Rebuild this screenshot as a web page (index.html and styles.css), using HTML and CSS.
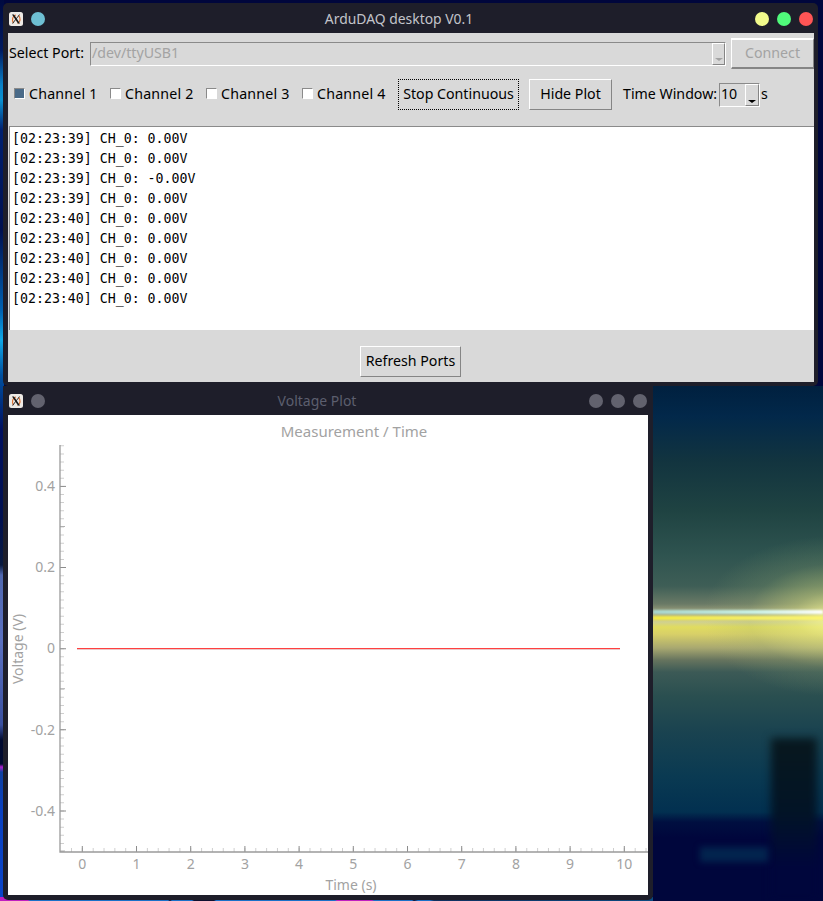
FILE: index.html
```html
<!DOCTYPE html>
<html lang="en">
<head>
<meta charset="utf-8">
<title>ArduDAQ desktop V0.1</title>
<link rel="stylesheet" href="styles.css">
</head>
<body>
<div class="wall-left"></div>
<div class="wall-bottom"></div>
<div class="wall-right">
  <div class="glow"></div>
  <div class="flare-white"></div>
  <div class="flare-yellow"></div>
  <div class="tower"></div>
  <div class="sill"></div>
</div>

<section class="win win-main">
  <header class="titlebar">
    <svg class="xicon" viewBox="0 0 14 14"><rect width="14" height="14" rx="2.5" fill="#eeeae6"/><path d="M7 3C3.5 3.5 2.5 8 4.5 11" class="xo"/><path d="M9.5 3.5C12 6 11.5 10 8.5 11.5" class="xo"/><path d="M3 2.5H5L11 11.5H9Z" class="xk"/><path d="M10.2 2.5H11L4 11.5H3Z" class="xk"/></svg>
    <span class="dot dot-pin"></span>
    <span class="title">ArduDAQ desktop V0.1</span>
    <span class="dot dot-min"></span>
    <span class="dot dot-max"></span>
    <span class="dot dot-close"></span>
  </header>
  <div class="body">
    <div class="row row-port">
      <span class="lbl lbl-port">Select Port:</span>
      <div class="combo">
        <span class="combo-val">/dev/ttyUSB1</span>
        <span class="combo-btn"><i class="tri tri-off"></i></span>
      </div>
      <button class="btn btn-connect" disabled>Connect</button>
    </div>
    <div class="row row-ctl">
      <label class="chk"><i class="box box-on"></i>Channel 1</label>
      <label class="chk"><i class="box"></i>Channel 2</label>
      <label class="chk"><i class="box"></i>Channel 3</label>
      <label class="chk"><i class="box"></i>Channel 4</label>
      <button class="btn btn-stop">Stop Continuous</button>
      <button class="btn btn-hide">Hide Plot</button>
      <span class="lbl lbl-tw">Time Window:</span>
      <div class="spin"><span class="spin-val">10</span><span class="spin-btn"><i class="tri"></i></span></div>
      <span class="lbl lbl-s">s</span>
    </div>
    <pre class="log">[02:23:39] CH_0: 0.00V
[02:23:39] CH_0: 0.00V
[02:23:39] CH_0: -0.00V
[02:23:39] CH_0: 0.00V
[02:23:40] CH_0: 0.00V
[02:23:40] CH_0: 0.00V
[02:23:40] CH_0: 0.00V
[02:23:40] CH_0: 0.00V
[02:23:40] CH_0: 0.00V</pre>
    <div class="row row-refresh"><button class="btn btn-refresh">Refresh Ports</button></div>
  </div>
</section>

<section class="win win-plot">
  <header class="titlebar titlebar-plot">
    <svg class="xicon" viewBox="0 0 14 14"><rect width="14" height="14" rx="2.5" fill="#eeeae6"/><path d="M7 3C3.5 3.5 2.5 8 4.5 11" class="xo"/><path d="M9.5 3.5C12 6 11.5 10 8.5 11.5" class="xo"/><path d="M3 2.5H5L11 11.5H9Z" class="xk"/><path d="M10.2 2.5H11L4 11.5H3Z" class="xk"/></svg>
    <span class="dot dot-off"></span>
    <span class="title title-off">Voltage Plot</span>
    <span class="dot dot-off"></span>
    <span class="dot dot-off"></span>
    <span class="dot dot-off"></span>
  </header>
  <svg class="plot" viewBox="8 415 640 480" width="640" height="480">
    <text class="t t-title t-mid" x="354" y="437">Measurement / Time</text>
    <line class="tick-minor tick-yminor" x1="62" x2="62" y1="445.3" y2="852"/>
    <line class="tick-minor tick-xminor" x1="71" x2="648" y1="850" y2="850"/>
    <line class="tick-mid tick-ymid" x1="62.5" x2="62.5" y1="526" y2="852"/>
    <line class="tick-major tick-ymajor" x1="63" x2="63" y1="485.9" y2="852"/>
    <line class="tick-major tick-xmajor" x1="81.8" x2="648" y1="849" y2="849"/>
    <path class="axis" d="M60 445V852H648"/>
    <text class="t t-end" x="55" y="491">0.4</text>
    <text class="t t-end" x="55" y="572">0.2</text>
    <text class="t t-end" x="55" y="653">0</text>
    <text class="t t-end" x="55" y="735">-0.2</text>
    <text class="t t-end" x="55" y="816">-0.4</text>
    <text class="t t-mid" x="82.3" y="869">0</text>
    <text class="t t-mid" x="136.5" y="869">1</text>
    <text class="t t-mid" x="190.7" y="869">2</text>
    <text class="t t-mid" x="244.9" y="869">3</text>
    <text class="t t-mid" x="299.1" y="869">4</text>
    <text class="t t-mid" x="353.3" y="869">5</text>
    <text class="t t-mid" x="407.5" y="869">6</text>
    <text class="t t-mid" x="461.7" y="869">7</text>
    <text class="t t-mid" x="515.9" y="869">8</text>
    <text class="t t-mid" x="570.1" y="869">9</text>
    <text class="t t-mid" x="624.3" y="869">10</text>
    <text class="t t-mid" x="351" y="890">Time (s)</text>
    <text class="t t-mid" transform="translate(23 649) rotate(-90)">Voltage (V)</text>
    <line class="trace-shadow" x1="77" x2="620" y1="649.5" y2="649.5"/>
    <line class="trace" x1="77" x2="620" y1="648.5" y2="648.5"/>
  </svg>
</section>
</body>
</html>
```
FILE: styles.css
```css
* { box-sizing: border-box; }
html, body { margin: 0; height: 100%; }
body {
  position: relative;
  width: 823px;
  height: 901px;
  overflow: hidden;
  background: #00063c;
  font-family: "Noto Sans", sans-serif;
  font-size: 14.2px;
  color: #000;
}

/* wallpaper */
.wall-left {
  position: absolute;
  left: 0; top: 0;
  width: 4px; height: 901px;
  background: linear-gradient(180deg,
    #000a40 0, #001a60 50px, #0a80c8 85px, #0a90d0 100px, #002070 130px,
    #001050 230px, #0060b0 310px, #10a8e8 340px, #0050a0 375px, #001060 430px,
    #001050 520px, #0a1a40 565px, #5068b0 575px, #5a70c0 640px, #3a50a0 725px,
    #000a30 740px, #000a30 764px, #b020d0 767px, #1040a0 772px, #0a40c0 810px, #0a44c8 901px);
}
.wall-bottom {
  position: absolute;
  left: 0; top: 897px;
  width: 653px; height: 4px;
  background: linear-gradient(90deg,
    #c020c0 0, #c020c0 28px, #1a70c8 30px, #1a70c8 168px, #101030 170px, #1a70c8 172px, #1a70c8 192px,
    #101030 194px, #101030 214px, #1a70c8 216px, #1a70c8 335px, #c020c0 337px, #c020c0 372px, #1a70c8 374px, #1a70c8 412px,
    #101030 414px, #1a70c8 418px, #1a70c8 430px, #103060 434px, #0a4a80 653px);
}
.wall-right {
  position: absolute;
  left: 653px; top: 386px;
  width: 170px; height: 515px;
  overflow: hidden;
  background: linear-gradient(180deg,
    #00203f 0, #02284a 30px, #12343f 75px, #1f4342 125px, #2f5450 170px, #3e5e56 200px,
    #6a7a66 218px, #a8a880 228px, #d0d090 236px, #e0dc60 241px, #d8d068 248px, #a8a870 262px,
    #66745e 274px, #3c5a56 286px, #2a4f50 310px, #1a4350 345px, #0a3a52 390px, #023050 426px,
    #000f40 436px, #00063c 452px, #00063c 515px);
}
.glow {
  position: absolute;
  left: 50px; top: 150px;
  width: 260px; height: 160px;
  border-radius: 50%;
  background: radial-gradient(closest-side, rgba(250,250,150,.8) 0, rgba(225,230,130,.45) 30%, rgba(160,180,115,.18) 65%, rgba(120,150,110,0) 100%);
}
.flare-white {
  position: absolute;
  left: 0; top: 224px;
  width: 170px; height: 4px;
  background: linear-gradient(90deg, #a8d8d0, #cdf5ea 60%, #ffffff);
  filter: blur(1px);
}
.flare-yellow {
  position: absolute;
  left: 0; top: 230px;
  width: 170px; height: 4px;
  background: linear-gradient(90deg, #f5ec40, #f8f060 50%, #fbf570);
  filter: blur(1px);
}
.tower {
  position: absolute;
  left: 118px; top: 352px;
  width: 46px; height: 163px;
  background: linear-gradient(180deg, #08181e 0, #021426 45%, #00063c 80%);
  filter: blur(4px);
}
.sill {
  position: absolute;
  left: 47px; top: 461px;
  width: 68px; height: 15px;
  background: #02244e;
  filter: blur(3px);
}

/* windows */
.win {
  position: absolute;
  background: #1e1e2a;
  border-radius: 5px;
  display: flex;
  flex-direction: column;
  padding: 0 4px 4px 5px;
}
.win-main { left: 3px; top: 3px; width: 815px; height: 383px; z-index: 2; }
.win-plot { left: 3px; top: 386px; width: 650px; height: 514px; padding-bottom: 5px; border-radius: 0 0 5px 5px; }

.titlebar {
  flex: none;
  height: 30px;
  display: flex;
  align-items: center;
  gap: 8px;
  padding: 2px 0 0 1px;
  margin-right: 1px;
}
.titlebar-plot { height: 29px; padding-top: 1px; margin-right: 2px; }
.xicon { width: 14px; height: 14px; flex: none; }
.xo { fill: none; stroke: #e07030; stroke-width: 1.2; }
.xk { fill: #1a1a1a; }
.dot { width: 14px; height: 14px; border-radius: 50%; flex: none; }
.dot-pin { background: #6ebfd3; }
.dot-min { background: #f1fa8c; }
.dot-max { background: #50fa7b; }
.dot-close { background: #ff5555; }
.dot-off { background: #62626e; }
.title {
  flex: 1;
  text-align: center;
  color: #c3c4ca;
  font-size: 13.9px;
  padding-right: 2px;
  padding-bottom: 2px;
}
.title-off { color: #5c5e6e; padding-right: 0; font-size: 14px; }

.body {
  flex: 1;
  background: #d9d9d9;
  display: flex;
  flex-direction: column;
  min-height: 0;
}
.row { display: flex; align-items: center; flex: none; }
.row-port { height: 31px; margin-top: 5px; padding-left: 1px; }
.row-ctl { height: 31px; margin-top: 10px; padding-left: 6px; }
.row-refresh { justify-content: center; margin-top: 16px; height: 31px; }

.lbl { white-space: nowrap; padding-bottom: 2px; }
.lbl-port { width: 75px; flex: none; }

.btn {
  font: inherit;
  color: #000;
  background: #d9d9d9;
  height: 31px;
  padding: 0 0 2px;
  border: 1px solid;
  border-color: #fff #858585 #858585 #fff;
  flex: none;
}
.btn-connect {
  width: 83px;
  margin-left: 5px;
  color: #a3a3a3;
  border-width: 2px 1px 2px 1px;
}
.btn-stop { width: 121px; border-color: #000; border-style: dotted; }
.btn-hide { width: 83px; margin-left: 10px; }
.btn-refresh { width: 101px; margin-left: -1px; }

.combo {
  flex: none;
  width: 636px;
  height: 24px;
  margin-left: 6px;
  display: flex;
  align-items: stretch;
  justify-content: space-between;
  border: 1px solid;
  border-color: #8a8a8a #fff #fff #8a8a8a;
}
.combo-val { color: #a3a3a3; padding-left: 1px; line-height: 20px; }
.combo-btn {
  width: 13px;
  border: 1px solid;
  border-color: #fff #858585 #858585 #fff;
  display: flex;
  flex-direction: column;
  justify-content: flex-end;
  align-items: center;
  padding-bottom: 3px;
}

.tri {
  display: block;
  width: 0; height: 0;
  border-left: 4px solid transparent;
  border-right: 4px solid transparent;
  border-top: 3px solid #000;
}
.tri-off { border-top-color: #a3a3a3; }

.chk { display: flex; align-items: center; white-space: nowrap; width: 96px; flex: none; padding-bottom: 2px; letter-spacing: .2px; }
.box {
  width: 11px;
  height: 11px;
  margin-right: 4px;
  background: #fff;
  border: 1px solid;
  border-color: #8a8a8a #fff #fff #8a8a8a;
}
.box-on { background: #4a6a88; }

.lbl-tw { margin-left: 11px; width: 96px; flex: none; }
.spin {
  flex: none;
  width: 41px;
  height: 24px;
  display: flex;
  justify-content: space-between;
  border: 1px solid;
  border-color: #8a8a8a #fff #fff #8a8a8a;
}
.spin-val { padding-left: 1px; line-height: 20px; }
.spin-btn {
  width: 14px;
  border: 1px solid;
  border-color: #fff #858585 #858585 #fff;
  display: flex;
  flex-direction: column;
  justify-content: flex-end;
  align-items: center;
  padding-bottom: 2px;
}
.lbl-s { margin-left: 1px; }

.log {
  flex: none;
  height: 204px;
  margin: 16px 0 0 1px;
  padding: 2px 0 0 2px;
  background: #fff;
  border-top: 1px solid #8a8a8a;
  border-left: 1px solid #8a8a8a;
  font-family: "DejaVu Sans Mono", monospace;
  font-size: 13.25px;
  line-height: 20px;
  color: #000;
}

/* plot */
.plot { display: block; background: #fff; flex: none; }
.t { font-family: "Noto Sans", sans-serif; font-size: 14px; fill: #a2a2a2; }
.t-title { font-size: 15px; }
.t-mid { text-anchor: middle; }
.t-end { text-anchor: end; }
.axis { fill: none; stroke: #9a9a9a; stroke-width: 1.3; }
.tick-minor { stroke: #cfcfcf; stroke-width: 4; }
.tick-mid { stroke: #b0b0b0; stroke-width: 5; stroke-dasharray: 1 161.3; }
.tick-major { stroke: #8c8c8c; stroke-width: 6; }
.tick-yminor { stroke-dasharray: 1 7.115; }
.tick-xminor { stroke-dasharray: 1 9.84; }
.tick-ymajor { stroke-dasharray: 1 80.15; }
.tick-xmajor { stroke-dasharray: 1 53.2; }
.trace { stroke: #ff4040; stroke-width: 1; }
.trace-shadow { stroke: #e8c8c8; stroke-width: 1; }
```
